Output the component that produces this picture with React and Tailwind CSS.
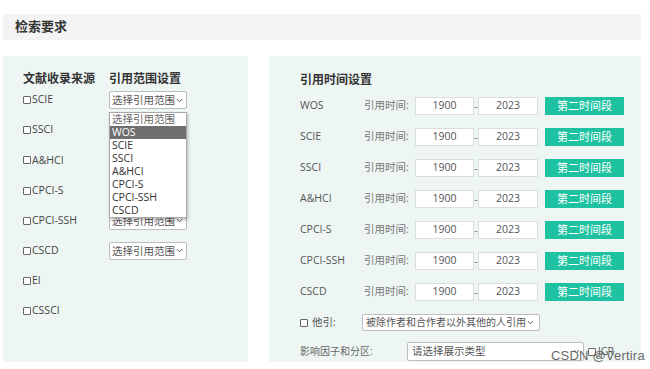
import React from "react";

const font = { fontFamily: '"Open Sans", "Noto Sans CJK SC", sans-serif' };

function Chevron() {
  return (
    <svg width="7" height="5" viewBox="0 0 7 5" className="shrink-0">
      <polyline points="0.8,1 3.5,3.8 6.2,1" fill="none" stroke="#666" strokeWidth="1" />
    </svg>
  );
}

function Box() {
  return <span className="inline-block w-[8px] h-[8px] border border-[#666] rounded-[1px] bg-white shrink-0" />;
}

function RangeSelect({ children }) {
  return (
    <div className="relative w-[78px] h-[18px] bg-white border border-[#bdbdbd] rounded-[2px] flex items-center justify-between pl-[2px] pr-[3px] text-[10.5px] text-[#555] leading-none">
      <span className="whitespace-nowrap">选择引用范围</span>
      <Chevron />
      {children}
    </div>
  );
}

const sources = ["SCIE", "SSCI", "A&HCI", "CPCI-S", "CPCI-SSH", "CSCD", "EI", "CSSCI"];
const options = ["选择引用范围", "WOS", "SCIE", "SSCI", "A&HCI", "CPCI-S", "CPCI-SSH", "CSCD"];
const timeRows = ["WOS", "SCIE", "SSCI", "A&HCI", "CPCI-S", "CPCI-SSH", "CSCD"];

export default function App() {
  return (
    <div className="relative w-[650px] h-[369px] bg-white overflow-hidden pt-[14px] pl-[3px]" style={font}>
      <div className="w-[638px] h-[26px] bg-[#f3f3f3] flex items-center pl-[12px]">
        <span className="text-[13px] font-bold text-[#333]">检索要求</span>
      </div>
      <div className="mt-[16px] flex gap-[21px]">
        {/* left panel */}
        <div className="w-[245px] h-[306px] bg-[#eef6f4] pl-[20px] pt-[15px]">
          <div className="flex h-[16px] items-center text-[12px] font-bold text-[#333]">
            <span className="w-[86px]">文献收录来源</span>
            <span>引用范围设置</span>
          </div>
          <div className="mt-[4px] flex flex-col gap-y-[12.2px]">
            {sources.map((s, i) => (
              <div key={s} className="flex h-[18px] items-center">
                <div className="w-[86px] flex items-center gap-[1px] text-[10.5px] text-[#444]">
                  <Box />
                  <span>{s}</span>
                </div>
                {i < 6 && (
                  <RangeSelect>
                    {i === 0 && (
                      <div className="absolute left-[-1px] top-[20px] z-10 w-[78px] bg-white border border-[#a9a9a9] shadow-[1px_2px_3px_rgba(0,0,0,0.25)]">
                        {options.map((o, j) => (
                          <div
                            key={o}
                            className={
                              "h-[13px] leading-[13px] pl-[2px] text-[10.5px] whitespace-nowrap " +
                              (j === 1 ? "bg-[#6f6f6f] text-white" : j === 0 ? "text-[#666]" : "text-[#333]")
                            }
                          >
                            {o}
                          </div>
                        ))}
                      </div>
                    )}
                  </RangeSelect>
                )}
              </div>
            ))}
          </div>
        </div>
        {/* right panel */}
        <div className="w-[372px] h-[306px] bg-[#eef6f4] pl-[31px] pt-[16px]">
          <div className="h-[16px] flex items-center text-[12px] font-bold text-[#333]">引用时间设置</div>
          <div className="mt-[9px] flex flex-col gap-y-[13px]">
            {timeRows.map((r) => (
              <div key={r} className="flex h-[18px] items-center text-[10.5px]">
                <span className="w-[64px] text-[#555]">{r}</span>
                <span className="w-[51px] text-[#777]">引用时间:</span>
                <div className="w-[59px] h-[18px] bg-white border border-[#ddd] flex items-center justify-center text-[#555]">1900</div>
                <span className="w-[4px] text-center text-[#777] leading-none">-</span>
                <div className="w-[60px] h-[18px] bg-white border border-[#ddd] flex items-center justify-center text-[#555]">2023</div>
                <div className="ml-[7px] w-[79px] h-[18px] bg-[#1ec2a1] flex items-center justify-center text-white text-[11px]">第二时间段</div>
              </div>
            ))}
            <div className="flex h-[17px] items-center text-[10.5px]">
              <div className="w-[62px] flex items-center gap-[4px] text-[#555]">
                <Box />
                <span>他引:</span>
              </div>
              <div className="w-[178px] h-[17px] bg-white border border-[#bdbdbd] rounded-[2px] flex items-center justify-between pl-[3px] pr-[5px] text-[10px] text-[#555]">
                <span className="whitespace-nowrap">被除作者和合作者以外其他的人引用</span>
                <Chevron />
              </div>
            </div>
          </div>
          <div className="mt-[11px] flex h-[19px] items-center text-[10.5px]">
            <span className="w-[107px] text-[#666] text-[10px]">影响因子和分区:</span>
            <div className="w-[177px] h-[19px] bg-white border border-[#bdbdbd] rounded-[2px] flex items-center justify-between pl-[4px] pr-[3px] text-[#555]">
              <span>请选择展示类型</span>
              <Chevron />
            </div>
            <div className="ml-[4px] flex items-center gap-[2px] text-[#555]">
              <Box />
              <span>JCR</span>
            </div>
          </div>
        </div>
      </div>
      <div className="absolute left-[551px] top-[346px] text-[13px] text-[#5a5a5a] opacity-90 tracking-[0.2px]" style={{ fontFamily: '"Liberation Sans", sans-serif' }}>
        CSDN @Vertira
      </div>
    </div>
  );
}
